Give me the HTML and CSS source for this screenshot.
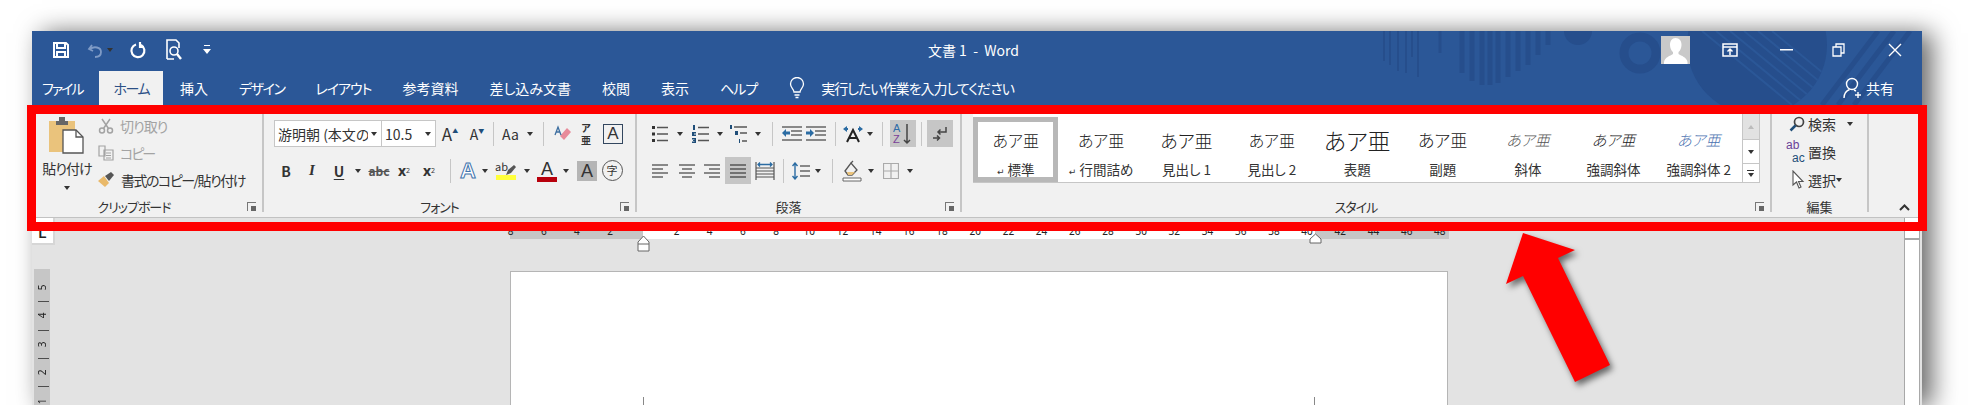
FILE: index.html
```html
<!DOCTYPE html>
<html lang="ja">

<head>
  <meta charset="utf-8">
  <title>文書 1 - Word</title>
  <link rel="stylesheet" href="styles.css">
</head>

<body>
  <div class="window">
    <div class="header">
      <svg class="pattern" width="1890" height="74" viewBox="0 0 1890 74">
        <defs>
          <clipPath id="bigring"><circle cx="1725" cy="14" r="70" /></clipPath>
        </defs>
        <g fill="none" stroke="#264e8c">
          <path d="M1352 0v30M1358 0v34M1366 0v40M1374 0v42M1380 0v26M1386 0v46" stroke-width="2" />
          <path d="M1408 0v22" stroke-width="3" />
          <path d="M1430 0v42M1440 0v50M1450 0v54M1458 0v54M1466 0v52M1476 0v46M1486 0v40M1496 0v34M1506 0v24M1516 0v14" stroke-width="5" />
          <circle cx="1608" cy="22" r="16" stroke-width="9" />
          <path d="M1790 74l56-74M1806 74l56-74M1822 74l56-74" stroke-width="5" />
        </g>
        <circle cx="1546" cy="0" r="14" fill="#264e8c" />
        <circle cx="1725" cy="14" r="70" fill="#264e8c" />
        <g clip-path="url(#bigring)" stroke="#2b5797" stroke-width="2">
          <path d="M1670 0l90 74M1684 0l90 74M1698 0l90 74M1712 0l90 74M1726 0l90 74M1740 0l90 74" />
        </g>
      </svg>
      <div class="titlebar">
        <div class="qat">
          <svg class="qat-save" width="18" height="18" viewBox="0 0 18 18" fill="none" stroke="#fff" stroke-width="2"><path d="M2 2h12l2 2v12H2zM5 2v5h8V2M5 16v-5h8v5" /></svg>
          <svg class="qat-undo" width="18" height="18" viewBox="0 0 18 18" fill="none" stroke="#7f9bc6" stroke-width="1.8"><path d="M5 4l-3 4 4 2M3 8c4-3 11-2 11 3 0 3-2 5-6 5" /></svg>
          <i class="caret caret-faded"></i>
          <svg class="qat-repeat" width="18" height="18" viewBox="0 0 18 18" fill="none" stroke="#fff" stroke-width="2.200"><path d="M7 3.500a6.500 6.500 0 1 0 5 .5M11 1v5h4" /></svg>
          <svg class="qat-preview" width="20" height="22" viewBox="0 0 20 22" fill="none" stroke="#fff" stroke-width="1.6"><path d="M2 20V1h9l3 3v5M2 20h7" /><circle cx="9" cy="12" r="4" /><path d="M12 15l4 5" stroke-width="2.400" /></svg>
          <svg class="qat-more" width="8" height="10" viewBox="0 0 8 10" fill="#fff"><path d="M1 0h6v1H1zM0 4h8L4 9z" /></svg>
        </div>
        <div class="doc-title">文書 1 &nbsp;-&nbsp; Word</div>
        <div class="controls">
          <div class="avatar">
            <svg width="29" height="28" viewBox="0 0 29 28"><path fill="#fff" d="M14.500 2c4 0 6 3 6 7 0 3-1.500 6-3 7v2c3 2 8 3 9 8v2H3v-2c1-5 6-6 9-8v-2c-1.500-1-3-4-3-7 0-4 2-7 5.500-7z" /></svg>
          </div>
          <svg class="ctl-ribbon" width="16" height="14" viewBox="0 0 16 14" fill="none" stroke="#fff" stroke-width="1.500"><path d="M1 1h14v12H1zM1 4h14" /><path d="M8 12V6M5.500 8.500L8 6l2.500 2.500" /></svg>
          <svg class="ctl-min" width="13" height="2" viewBox="0 0 13 2"><path fill="#fff" d="M0 0h13v1.500H0z" /></svg>
          <svg class="ctl-restore" width="13" height="14" viewBox="0 0 13 14" fill="none" stroke="#fff" stroke-width="1.300"><path d="M1 4h8v9H1zM4 4V1h8v9H9" /></svg>
          <svg class="ctl-close" width="14" height="14" viewBox="0 0 14 14" fill="none" stroke="#fff" stroke-width="1.400"><path d="M1 1l12 12M13 1L1 13" /></svg>
        </div>
      </div>
      <div class="tabs">
        <span class="tab tight-2">ファイル</span>
        <span class="tab active tight-15">ホーム</span>
        <span class="tab">挿入</span>
        <span class="tab tight-15">デザイン</span>
        <span class="tab tight-1">レイアウト</span>
        <span class="tab">参考資料</span>
        <span class="tab">差し込み文書</span>
        <span class="tab">校閲</span>
        <span class="tab">表示</span>
        <span class="tab tight-1">ヘルプ</span>
        <span class="tell-me">
          <svg width="16" height="22" viewBox="0 0 16 22" fill="none" stroke="#fff" stroke-width="1.300"><path d="M5 15c0-3-3.500-4-3.500-8a6.500 6.500 0 0 1 13 0c0 4-3.500 5-3.500 8zM5.500 18h5M6.500 20.500h3" /></svg>
          <span class="tight-1">実行したい作業を入力してください</span>
        </span>
        <span class="share">
          <svg width="20" height="22" viewBox="0 0 20 22" fill="none" stroke="#fff" stroke-width="1.400"><circle cx="9" cy="7" r="5.500" /><path d="M1 21c0-5 3-7.500 5.500-8.500M11 13l2 1M15 15v6M12 18h6" /></svg>
          <span>共有</span>
        </span>
      </div>
    </div>

    <div class="ribbon">
      <div class="group g-clipboard">
        <div class="group-body">
          <div class="paste">
            <svg width="36" height="37" viewBox="0 0 36 37">
              <path fill="#eac37c" d="M0 4h26v31H0z" />
              <path fill="#666" d="M7 4h12v4H7zM10 0h6v4h-6z" />
              <path fill="#fff" stroke="#555" stroke-width="1.300" d="M14 13h13l7 7v16H14z" />
              <path fill="none" stroke="#555" stroke-width="1.300" d="M27 13v7h7" />
            </svg>
            <span class="paste-label tight-1">貼り付け</span>
            <i class="caret"></i>
          </div>
          <div class="clip-list">
            <div class="clip-item faded">
              <svg width="16" height="16" viewBox="0 0 16 16" fill="none" stroke="#a3a3a3" stroke-width="1.500"><circle cx="4" cy="12.500" r="2.500" /><circle cx="12" cy="12.500" r="2.500" /><path d="M5.500 10.500L12 1M10.500 10.500L4 1" /></svg>
              <span class="tight-1">切り取り</span>
            </div>
            <div class="clip-item faded">
              <svg width="16" height="16" viewBox="0 0 16 16" fill="none" stroke="#a3a3a3" stroke-width="1.200"><path d="M1 1h6v10H1zM6 5h9v10H6zM8 8h5M8 10.500h5M8 13h5" /></svg>
              <span class="tight-2">コピー</span>
            </div>
            <div class="clip-item">
              <svg width="17" height="16" viewBox="0 0 17 16"><path fill="#e9b96a" d="M0 9l6-5 5 7-4 4z" /><path fill="#555" d="M7 4l6-4 3 3-5 6z" /></svg>
              <span class="tight-15">書式のコピー/貼り付け</span>
            </div>
          </div>
        </div>
        <div class="group-label"><span class="label-text label-clip tight-1">クリップボード</span><i class="launcher"></i></div>
      </div>

      <div class="group g-font">
        <div class="group-body tool-rows">
          <div class="tool-row">
            <div class="combo combo-font"><span>游明朝 (本文の</span><i class="caret"></i></div>
            <div class="combo combo-size"><span>10.5</span><i class="caret"></i></div>
            <span class="tool w28 glyph-lg">A<sup class="mark">▲</sup></span>
            <span class="tool w26 glyph-md">A<sup class="mark">▼</sup></span>
            <span class="tool w6"><i class="sep"></i></span>
            <span class="tool w29 glyph-aa">Aa</span>
            <span class="tool w10"><i class="caret"></i></span>
            <span class="tool w16"><i class="sep"></i></span>
            <span class="tool w24">
              <svg width="18" height="18" viewBox="0 0 18 18"><path fill="#e88b9a" d="M6 11l7-8 4 4-7 8z" /><path fill="none" stroke="#3c6ea0" stroke-width="1.300" d="M1 10l3-8 3 8M2 7h4" /></svg>
            </span>
            <span class="tool w22 ruby"><b>ア</b><b>亜</b></span>
            <span class="tool w32"><span class="boxed-a">A</span></span>
          </div>
          <div class="tool-row">
            <span class="tool w24 fmt-b">B</span>
            <span class="tool w28 fmt-i">I</span>
            <span class="tool w26 fmt-u">U</span>
            <span class="tool w12"><i class="caret"></i></span>
            <span class="tool w30 fmt-s">abc</span>
            <span class="tool w20 fmt-x">x<sub>2</sub></span>
            <span class="tool w30 fmt-x">x<sup>2</sup></span>
            <span class="tool w12"><i class="sep"></i></span>
            <span class="tool w24 fx-a">A</span>
            <span class="tool w10"><i class="caret"></i></span>
            <span class="tool w32">
              <span class="bar-icon"><span class="hl-text">ab</span><i class="bar bar-yellow"></i>
                <svg class="hl-pen" width="12" height="12" viewBox="0 0 12 12"><path fill="#555" d="M1 11l2-5 6-5 2 2-5 6z" /></svg></span>
            </span>
            <span class="tool w10"><i class="caret"></i></span>
            <span class="tool w30"><span class="bar-icon"><span class="color-a">A</span><i class="bar bar-red"></i></span></span>
            <span class="tool w8"><i class="caret"></i></span>
            <span class="tool w34"><span class="shaded-a">A</span></span>
            <span class="tool w16"><span class="circled">字</span></span>
          </div>
        </div>
        <div class="group-label"><span class="label-text tight-1">フォント</span><i class="launcher"></i></div>
      </div>

      <div class="group g-para">
        <div class="group-body tool-rows">
          <div class="tool-row">
            <span class="tool w29">
              <svg width="16" height="18" viewBox="0 0 16 18"><path fill="#333" d="M0 1h3v3H0zM0 7.500h3v3H0zM0 14h3v3H0z" /><path stroke="#555" stroke-width="1.500" d="M5 2.500h11M5 9h11M5 15.500h11" /></svg>
            </span>
            <span class="tool w12"><i class="caret"></i></span>
            <span class="tool w28">
              <svg width="17" height="18" viewBox="0 0 17 18"><path fill="#1f4e79" d="M1 0h2v5H1zM0 7h4v1.500H2v1h2V11H0zM0 13h4v5H0v-1.500h2.500v-.5H1v-1h1.500v-.5H0z" /><path stroke="#555" stroke-width="1.500" d="M6 2.500h11M6 9h11M6 15.500h11" /></svg>
            </span>
            <span class="tool w12"><i class="caret"></i></span>
            <span class="tool w26">
              <svg width="18" height="18" viewBox="0 0 18 18"><path fill="#1f4e79" d="M0 0h2v4H0zM5 6h3v4H5zM9 14h1v4H9z" /><path stroke="#555" stroke-width="1.300" d="M4 2h13M10 8h7M12 16h5" /></svg>
            </span>
            <span class="tool w12"><i class="caret"></i></span>
            <span class="tool w16"><i class="sep"></i></span>
            <span class="tool w23">
              <svg width="20" height="16" viewBox="0 0 20 16"><path stroke="#666" stroke-width="1.500" d="M0 1h20M9 5h11M9 9h11M0 14h20" /><path fill="#2b6ca3" d="M0 7l4-4v2.500h4v3H4V11z" /></svg>
            </span>
            <span class="tool w26">
              <svg width="20" height="16" viewBox="0 0 20 16"><path stroke="#666" stroke-width="1.500" d="M0 1h20M9 5h11M9 9h11M0 14h20" /><path fill="#2b6ca3" d="M8 7L4 3v2.500H0v3h4V11z" /></svg>
            </span>
            <span class="tool w12"><i class="sep"></i></span>
            <span class="tool w24">
              <svg width="20" height="18" viewBox="0 0 20 18"><path fill="none" stroke="#222" stroke-width="2" d="M4 17l6-12 6 12M6.500 13h7" /><path fill="#2b6ca3" d="M0 4l4-3v2h1v2H4v2zM20 4l-4-3v2h-1v2h1v2z" /></svg>
            </span>
            <span class="tool w10"><i class="caret"></i></span>
            <span class="tool w15"><i class="sep"></i></span>
            <span class="tool w26 on">
              <svg width="20" height="22" viewBox="0 0 20 22" font-family="Liberation Sans" font-size="11"><text x="0" y="9" fill="#2f6ca8">A</text><text x="0" y="20" fill="#7a3f98">Z</text><path fill="none" stroke="#444" stroke-width="1.500" d="M14 1v19M11 17l3 3 3-3" /></svg>
            </span>
            <span class="tool w11"><i class="sep"></i></span>
            <span class="tool w26 on">
              <svg width="16" height="16" viewBox="0 0 16 16" fill="none" stroke="#444" stroke-width="1.500"><path d="M14 1v5H6M8.500 3.500L6 6l2.500 2.500M1 12h6M5 9.500L7.500 12 5 14.500" /></svg>
            </span>
          </div>
          <div class="tool-row">
            <span class="tool w30">
              <svg width="16" height="14" viewBox="0 0 16 14" stroke="#666" stroke-width="1.400"><path d="M0 1h16M0 5h11M0 9h16M0 13h11" /></svg>
            </span>
            <span class="tool w24">
              <svg width="16" height="14" viewBox="0 0 16 14" stroke="#666" stroke-width="1.400"><path d="M0 1h16M3 5h10M0 9h16M3 13h10" /></svg>
            </span>
            <span class="tool w26">
              <svg width="16" height="14" viewBox="0 0 16 14" stroke="#666" stroke-width="1.400"><path d="M0 1h16M5 5h11M0 9h16M5 13h11" /></svg>
            </span>
            <span class="tool w26 on">
              <svg width="16" height="14" viewBox="0 0 16 14" stroke="#555" stroke-width="1.400"><path d="M0 1h16M0 5h16M0 9h16M0 13h16" /></svg>
            </span>
            <span class="tool w27">
              <svg width="20" height="20" viewBox="0 0 20 20"><path fill="none" stroke="#555" stroke-width="1.200" d="M1 1v18M19 1v18M1 7h18M1 10h18M1 13h18M1 16h18" /><path fill="none" stroke="#2b6ca3" stroke-width="1.300" d="M3 3.500h14M5 1.500l-2 2 2 2M15 1.500l2 2-2 2" /></svg>
            </span>
            <span class="tool w10"><i class="sep"></i></span>
            <span class="tool w26">
              <svg width="18" height="18" viewBox="0 0 18 18"><path stroke="#666" stroke-width="1.500" d="M8 4h10M8 9h10M8 14h10" /><path fill="none" stroke="#2b6ca3" stroke-width="1.400" d="M3 1v16M.5 4L3 1l2.500 3M.5 14L3 17l2.500-3" /></svg>
            </span>
            <span class="tool w8"><i class="caret"></i></span>
            <span class="tool w20"><i class="sep"></i></span>
            <span class="tool w20">
              <svg width="20" height="22" viewBox="0 0 20 22"><path fill="none" stroke="#555" stroke-width="1.300" d="M3 11l6-8 6 7-5 5H6z" /><path fill="#eac37c" d="M5 12h8l-3 3H6z" /><path stroke="#555" stroke-width="1.300" d="M9 3l2-2" /><path fill="#fff" stroke="#666" d="M1 18h18v3H1z" /></svg>
            </span>
            <span class="tool w18"><i class="caret"></i></span>
            <span class="tool w22">
              <svg width="16" height="16" viewBox="0 0 16 16" fill="none" stroke="#aaa" stroke-width="1.200"><path d="M.5.500h15v15H.5zM8 .5v15M.5 8h15" /></svg>
            </span>
            <span class="tool w16"><i class="caret"></i></span>
          </div>
        </div>
        <div class="group-label"><span class="label-text">段落</span><i class="launcher"></i></div>
      </div>

      <div class="group g-styles">
        <div class="group-body gallery-wrap">
          <div class="gallery">
            <div class="style-item selected"><span class="sample">あア亜</span><span class="style-name"><i class="ret">↵</i> 標準</span></div>
            <div class="style-item"><span class="sample">あア亜</span><span class="style-name"><i class="ret">↵</i> 行間詰め</span></div>
            <div class="style-item"><span class="sample sample-h1">あア亜</span><span class="style-name">見出し 1</span></div>
            <div class="style-item"><span class="sample">あア亜</span><span class="style-name">見出し 2</span></div>
            <div class="style-item"><span class="sample sample-title">あア亜</span><span class="style-name">表題</span></div>
            <div class="style-item"><span class="sample sample-sub">あア亜</span><span class="style-name">副題</span></div>
            <div class="style-item"><span class="sample sample-em">あア亜</span><span class="style-name">斜体</span></div>
            <div class="style-item"><span class="sample sample-strong">あア亜</span><span class="style-name">強調斜体</span></div>
            <div class="style-item"><span class="sample sample-intense">あア亜</span><span class="style-name">強調斜体 2</span></div>
            <div class="gallery-scroll">
              <span class="scroll-up"><i class="caret caret-up"></i></span>
              <span class="scroll-down"><i class="caret"></i></span>
              <span class="scroll-more"><i class="more-bar"></i><i class="caret"></i></span>
            </div>
          </div>
        </div>
        <div class="group-label"><span class="label-text tight-1">スタイル</span><i class="launcher"></i></div>
      </div>

      <div class="group g-edit">
        <div class="group-body edit-list">
          <div class="edit-item">
            <svg class="edit-icon" width="16" height="16" viewBox="0 0 16 16" fill="none"><circle cx="10" cy="6" r="4.500" stroke="#444" stroke-width="1.700" /><path d="M6.500 9.500L1.500 14.500" stroke="#1f4e79" stroke-width="2.500" /></svg>
            <span>検索</span><i class="caret edit-caret"></i>
          </div>
          <div class="edit-item">
            <span class="edit-icon abac"><b>ab</b><b>ac</b></span>
            <span>置換</span>
          </div>
          <div class="edit-item">
            <svg class="edit-icon" width="16" height="20" viewBox="0 0 16 20"><path fill="#fff" stroke="#555" stroke-width="1.100" d="M4 1v14l3.500-3 2.500 6 2-1-2.500-5.500H14z" /></svg>
            <span>選択</span><i class="caret"></i>
          </div>
        </div>
        <div class="group-label"><span class="label-text">編集</span></div>
      </div>

      <div class="collapse">
        <svg width="11" height="7" viewBox="0 0 11 7" fill="none" stroke="#333" stroke-width="2"><path d="M1 6l4.500-4.500L10 6" /></svg>
      </div>
    </div>

    <div class="workspace">
      <div class="left-col">
        <div class="tab-stop">L</div>
        <div class="vruler">
          <span>5</span><span>|</span><span>4</span><span>|</span><span>3</span><span>|</span><span>2</span><span>|</span><span>1</span>
        </div>
      </div>
      <div class="center-col">
        <div class="hruler">
          <div class="hruler-gray hruler-left"></div>
          <div class="hruler-white"></div>
          <div class="hruler-gray hruler-right"></div>
          <div class="hruler-nums">
            <span>8</span><span>6</span><span>4</span><span>2</span><span></span><span>2</span><span>4</span><span>6</span><span>8</span><span>10</span><span>12</span><span>14</span><span>16</span><span>18</span><span>20</span><span>22</span><span>24</span><span>26</span><span>28</span><span>30</span><span>32</span><span>34</span><span>36</span><span>38</span><span>40</span><span>42</span><span>44</span><span>46</span><span>48</span>
          </div>
          <svg class="marker marker-left" width="13" height="17" viewBox="0 0 13 17"><path fill="#fff" stroke="#666" d="M6.500 1l5.500 6v9H1V7zM1 9h11" /></svg>
          <svg class="marker marker-right" width="13" height="11" viewBox="0 0 13 11"><path fill="#fff" stroke="#666" d="M6.500 1l5.500 5v4H1V6z" /></svg>
        </div>
        <div class="page">
          <div class="crop-marks"><i></i><i></i></div>
        </div>
      </div>
      <div class="vscroll"><div class="vscroll-up"></div></div>
    </div>
  </div>

  <div class="callout-box"></div>
  <svg class="callout-arrow" width="120" height="165" viewBox="0 0 120 165">
    <path fill="#f00" d="M23 5L75 22 58 30 110 137 75 154 23 48 6 56z" />
  </svg>
</body>

</html>
```

FILE: styles.css
```css
html, body {
  margin: 0;
  height: 405px;
  overflow: hidden;
  background: #fff;
}

body {
  position: relative;
  padding: 31px 0 0 32px;
  box-sizing: border-box;
  font-family: "Noto Sans CJK JP", "Noto Sans", sans-serif;
  font-feature-settings: "palt";
  font-size: 14px;
  color: #333;
}

i {
  font-style: normal;
}

/* the original UI font has much narrower kana */
.tight-1 {
  letter-spacing: -1px;
}

.tight-15 {
  letter-spacing: -1.500px;
}

.tight-2 {
  letter-spacing: -2px;
}

.window {
  width: 1890px;
  height: 374px;
  display: flex;
  flex-direction: column;
  background: #e3e3e3;
  box-shadow: 10px 2px 24px rgba(0, 0, 0, .6);
}

/* title bar and tabs */
.header {
  position: relative;
  height: 74px;
  background: #2b5797;
  color: #fff;
  overflow: hidden;
}

.pattern {
  position: absolute;
  left: 0;
  top: 0;
}

.titlebar {
  position: relative;
  height: 40px;
  display: flex;
  align-items: center;
  padding-bottom: 2px;
  box-sizing: border-box;
}

.qat {
  display: flex;
  align-items: center;
  width: 200px;
  padding-left: 20px;
  box-sizing: border-box;
}

.qat-undo {
  margin-left: 17px;
}

.caret-faded {
  margin-left: 2px;
  border-top-color: #7f9bc6;
}

.qat-repeat {
  margin-left: 16px;
}

.qat-preview {
  margin-left: 18px;
}

.qat-more {
  margin-left: 18px;
}

.doc-title {
  flex: 1;
  text-align: center;
  font-size: 14px;
  padding-left: 54px;
  white-space: nowrap;
}

.controls {
  display: flex;
  align-items: center;
  width: 261px;
  flex-shrink: 0;
}

.avatar {
  width: 29px;
  height: 28px;
  background: #c9c9c9;
  overflow: hidden;
}

.ctl-ribbon {
  margin-left: 32px;
}

.ctl-min {
  margin-left: 42px;
}

.ctl-restore {
  margin-left: 39px;
}

.ctl-close {
  margin-left: 43px;
}

.tabs {
  position: relative;
  height: 34px;
  display: flex;
  align-items: center;
  gap: 31px;
  padding-left: 10px;
}

.tab {
  font-size: 14px;
  white-space: nowrap;
}

.tab.active {
  align-self: stretch;
  display: flex;
  align-items: center;
  margin: 0 -14px;
  padding: 0 14px;
  background: #f1f1f1;
  color: #2b4f86;
}

.tell-me {
  display: flex;
  align-items: center;
  gap: 16px;
  margin-left: 1px;
  white-space: nowrap;
}

.share {
  display: flex;
  align-items: center;
  gap: 3px;
  margin-left: auto;
  margin-right: 28px;
}

/* ribbon */
.ribbon {
  height: 112px;
  flex-shrink: 0;
  display: flex;
  padding-left: 4px;
  background: #f1f1f1;
  border-bottom: 1px solid #c2c2c2;
}

.group {
  display: flex;
  flex-direction: column;
  box-sizing: border-box;
  border-right: 2px solid #c6c6c6;
  margin-bottom: 5px;
}

.group-body {
  flex: 1;
}

.g-clipboard {
  width: 228px;
}

.g-font {
  width: 373px;
}

.g-para {
  width: 325px;
}

.g-styles {
  width: 810px;
}

.g-edit {
  width: 97px;
}

.group-label {
  height: 20px;
  margin-bottom: -4px;
  display: flex;
  align-items: center;
  font-size: 13px;
}

.label-text {
  flex: 1;
  text-align: center;
}

.label-clip {
  padding-right: 10px;
}

.launcher {
  position: relative;
  width: 9px;
  height: 9px;
  margin: 0 6px 0 5px;
  border-left: 1px solid #777;
  border-top: 1px solid #777;
  box-sizing: border-box;
}

.launcher::after {
  content: "";
  position: absolute;
  right: 0;
  bottom: 0;
  width: 5px;
  height: 5px;
  background: #666;
}

.caret {
  display: inline-block;
  width: 0;
  height: 0;
  border-left: 3.5px solid transparent;
  border-right: 3.5px solid transparent;
  border-top: 4px solid #333;
}

.caret-up {
  border-top: 0;
  border-bottom: 4px solid #bbb;
}

.sep {
  display: block;
  width: 1px;
  height: 24px;
  background: #c6c6c6;
}

/* clipboard */
.g-clipboard .group-body {
  display: flex;
}

.paste {
  width: 62px;
  padding-top: 12px;
  display: flex;
  flex-direction: column;
  align-items: center;
  box-sizing: border-box;
}

.paste-label {
  margin-top: 2px;
  line-height: 24px;
  white-space: nowrap;
}

.paste .caret {
  margin-top: 6px;
}

.clip-list {
  padding-top: 7px;
}

.clip-item {
  height: 27px;
  display: flex;
  align-items: center;
  gap: 6px;
  white-space: nowrap;
}

.faded {
  color: #a3a3a3;
}

/* tool rows */
.tool-rows {
  padding-top: 15px;
  display: flex;
  flex-direction: column;
  gap: 10px;
}

.tool-row {
  height: 27px;
  display: flex;
}

.g-font .tool-row {
  padding-left: 10px;
}

.g-para .tool-row {
  padding-left: 8px;
}

.tool {
  flex-shrink: 0;
  display: flex;
  align-items: center;
  justify-content: center;
  height: 27px;
}

.tool.on {
  background: #c6c6c6;
}

.w6 { width: 6px; }
.w8 { width: 8px; }
.w10 { width: 10px; }
.w11 { width: 11px; }
.w12 { width: 12px; }
.w15 { width: 15px; }
.w16 { width: 16px; }
.w18 { width: 18px; }
.w20 { width: 20px; }
.w22 { width: 22px; }
.w23 { width: 23px; }
.w24 { width: 24px; }
.w26 { width: 26px; }
.w27 { width: 27px; }
.w28 { width: 28px; }
.w29 { width: 29px; }
.w30 { width: 30px; }
.w32 { width: 32px; }
.w34 { width: 34px; }

.combo {
  display: flex;
  align-items: center;
  justify-content: space-between;
  height: 27px;
  padding: 0 4px 0 3px;
  box-sizing: border-box;
  background: #fff;
  border: 1px solid #c6c6c6;
  white-space: nowrap;
  overflow: hidden;
}

.combo-font {
  width: 108px;
}

.combo-font span {
  width: 90px;
  overflow: hidden;
}

.combo-size {
  width: 55px;
  margin-left: -1px;
}

.glyph-lg {
  font-size: 17px;
}

.glyph-md {
  font-size: 14px;
}

.mark {
  font-size: 6px;
  color: #1f4e79;
  margin-top: -6px;
}

.glyph-aa {
  font-size: 14px;
}

.ruby {
  flex-direction: column;
  font-size: 10px;
  line-height: 12px;
}

.ruby b {
  height: 12px;
}

.boxed-a {
  width: 18px;
  height: 18px;
  border: 1px solid #33475f;
  font-family: "Liberation Sans", sans-serif;
  font-size: 17px;
  line-height: 18px;
  text-align: center;
}

.fmt-b {
  font-weight: bold;
  font-size: 14px;
}

.fmt-i {
  font-style: italic;
  font-family: "Liberation Serif", serif;
  font-weight: bold;
  font-size: 15px;
}

.fmt-u {
  font-weight: bold;
  font-size: 14px;
  text-decoration: underline;
  text-underline-offset: 2px;
}

.fmt-s {
  font-size: 12px;
  font-weight: bold;
  color: #555;
  text-decoration: line-through;
}

.fmt-x {
  font-family: "Noto Sans", sans-serif;
  font-size: 14px;
  font-weight: bold;
}

.fmt-x sub,
.fmt-x sup {
  font-size: 7px;
  font-weight: normal;
}

.fx-a {
  font-family: "Liberation Sans", sans-serif;
  font-size: 22px;
  font-weight: bold;
  color: #fff;
  -webkit-text-stroke: 1px #3f74ad;
}

.bar-icon {
  position: relative;
  width: 22px;
  height: 22px;
  display: flex;
  flex-direction: column;
  align-items: center;
}

.hl-text {
  height: 15px;
  font-size: 11px;
  line-height: 13px;
  align-self: flex-start;
}

.hl-pen {
  position: absolute;
  right: 0;
  top: 4px;
}

.color-a {
  height: 17px;
  font-size: 18px;
  line-height: 19px;
  font-family: "Liberation Sans", sans-serif;
}

.bar {
  display: block;
  width: 20px;
  height: 5px;
}

.bar-yellow {
  background: #ffff3c;
}

.bar-red {
  background: #b8000c;
}

.shaded-a {
  width: 20px;
  height: 20px;
  background: #b5b5b5;
  font-family: "Liberation Sans", sans-serif;
  font-size: 18px;
  line-height: 20px;
  text-align: center;
}

.circled {
  flex-shrink: 0;
  width: 19px;
  height: 19px;
  border: 1px solid #555;
  border-radius: 50%;
  font-size: 11px;
  line-height: 19px;
  text-align: center;
}

/* style gallery */
.gallery-wrap {
  padding: 9px 0 0 11px;
}

.gallery {
  display: flex;
  width: 787px;
  height: 69px;
  box-sizing: border-box;
  background: #fff;
  border-bottom: 1px solid #c6c6c6;
  border-right: 1px solid #c6c6c6;
}

.style-item {
  position: relative;
  width: 85.400px;
  flex-shrink: 0;
  display: flex;
  flex-direction: column;
  align-items: center;
  padding-top: 13px;
  box-sizing: border-box;
}

.style-item.selected::before {
  content: "";
  position: absolute;
  inset: 3px 0 0 0;
  border: 5px solid #b8b8b8;
}

.sample {
  height: 26px;
  line-height: 26px;
  font-size: 16px;
  font-weight: 300;
  color: #222;
  white-space: nowrap;
}

.sample-h1 {
  font-size: 18px;
}

.sample-title {
  font-size: 23px;
}

.sample-sub {
  font-size: 17px;
}

.sample-em {
  font-size: 15px;
  font-style: italic;
  color: #555;
}

.sample-strong {
  font-size: 15px;
  font-style: italic;
}

.sample-intense {
  font-size: 15px;
  font-style: italic;
  color: #4a72b0;
}

.style-name {
  margin-top: 6px;
  line-height: 20px;
  font-size: 13.500px;
  white-space: nowrap;
}

.ret {
  font-family: "DejaVu Sans", sans-serif;
  font-size: 9px;
}

.gallery-scroll {
  width: 17px;
  margin-left: auto;
  display: flex;
  flex-direction: column;
  border-left: 1px solid #c6c6c6;
}

.gallery-scroll span {
  display: flex;
  flex-direction: column;
  align-items: center;
  justify-content: center;
}

.scroll-up {
  height: 25px;
  background: #e2e2e2;
  border-bottom: 1px solid #c6c6c6;
}

.scroll-down {
  height: 23px;
  border-bottom: 1px solid #c6c6c6;
}

.scroll-more {
  flex: 1;
  gap: 2px;
}

.more-bar {
  width: 7px;
  height: 1px;
  background: #333;
}

/* editing */
.edit-list {
  padding: 5px 0 0 14px;
}

.edit-item {
  height: 28px;
  display: flex;
  align-items: center;
  font-size: 14px;
  white-space: nowrap;
}

.edit-icon {
  width: 22px;
  flex-shrink: 0;
}

.edit-caret {
  margin-left: 11px;
}

.abac {
  display: flex;
  flex-direction: column;
  font-family: "Liberation Sans", sans-serif;
  font-size: 12px;
  line-height: 13px;
}

.abac b {
  height: 13px;
  font-weight: normal;
}

.abac b:first-child {
  color: #6a3f98;
}

.abac b:last-child {
  color: #1f4e79;
  padding-left: 6px;
}

.collapse {
  flex: 1;
  display: flex;
  justify-content: flex-end;
  align-items: flex-end;
  padding: 0 12px 6px 0;
}

/* document area */
.workspace {
  flex: 1;
  min-height: 0;
  display: flex;
  background: #e3e3e3;
}

.left-col {
  width: 23px;
  flex-shrink: 0;
  display: flex;
  flex-direction: column;
}

.tab-stop {
  height: 27px;
  flex-shrink: 0;
  background: #fff;
  border-bottom: 2px solid #d6d6d6;
  border-right: 2px solid #d6d6d6;
  box-sizing: border-box;
  padding-top: 8px;
  text-align: center;
  font-family: "Liberation Sans", sans-serif;
  font-size: 13px;
  font-weight: bold;
  line-height: 16px;
  color: #222;
}

.vruler {
  flex: 1;
  min-height: 0;
  width: 16px;
  margin: 24px 0 0 2px;
  padding-top: 7px;
  box-sizing: border-box;
  display: flex;
  flex-direction: column;
  align-items: center;
  background: #c6c6c6;
  font-family: "Noto Sans", sans-serif;
  font-size: 10px;
  color: #222;
}

.vruler span {
  height: 14.200px;
  line-height: 14.200px;
  writing-mode: vertical-rl;
  transform: rotate(180deg);
}

.center-col {
  flex: 1;
  min-width: 0;
  display: flex;
  flex-direction: column;
}

.hruler {
  position: relative;
  display: flex;
  flex-shrink: 0;
  width: 939px;
  height: 15px;
  margin: 6px 0 0 455px;
}

.hruler-gray {
  background: #c6c6c6;
}

.hruler-left {
  width: 133px;
}

.hruler-white {
  width: 672px;
  background: #fff;
}

.hruler-right {
  flex: 1;
}

.hruler-nums {
  position: absolute;
  left: -16px;
  top: 0;
  display: flex;
  font-family: "Noto Sans", sans-serif;
  font-size: 10px;
  line-height: 15px;
  color: #222;
}

.hruler-nums span {
  width: 33.200px;
  text-align: center;
}

.marker {
  position: absolute;
}

.marker-left {
  left: 127px;
  top: 11px;
}

.marker-right {
  left: 799px;
  top: 9px;
}

.page {
  flex: 1;
  min-height: 0;
  width: 938px;
  margin: 32px 0 0 455px;
  box-sizing: border-box;
  background: #fff;
  border: 1px solid #b5b5b5;
  border-bottom: 0;
  padding-top: 125px;
}

.crop-marks {
  display: flex;
  justify-content: space-between;
  padding: 0 132px 0 132px;
}

.crop-marks i {
  width: 1px;
  height: 8px;
  background: #888;
}

.vscroll {
  width: 16px;
  margin: 0 2px 0 26px;
  flex-shrink: 0;
  box-sizing: border-box;
  background: #fff;
  border-left: 1px solid #a8a8a8;
  border-right: 1px solid #a8a8a8;
}

.vscroll-up {
  height: 20px;
  border-bottom: 2px solid #a8a8a8;
}

/* annotation drawn over the screenshot */
.callout-box {
  position: absolute;
  left: 27px;
  top: 105px;
  width: 1900px;
  height: 126px;
  box-sizing: border-box;
  border: 9px solid #f00;
}

.callout-arrow {
  position: absolute;
  left: 1500px;
  top: 228px;
  overflow: visible;
  filter: drop-shadow(3px 4px 3px rgba(0, 0, 0, .55));
}
```
